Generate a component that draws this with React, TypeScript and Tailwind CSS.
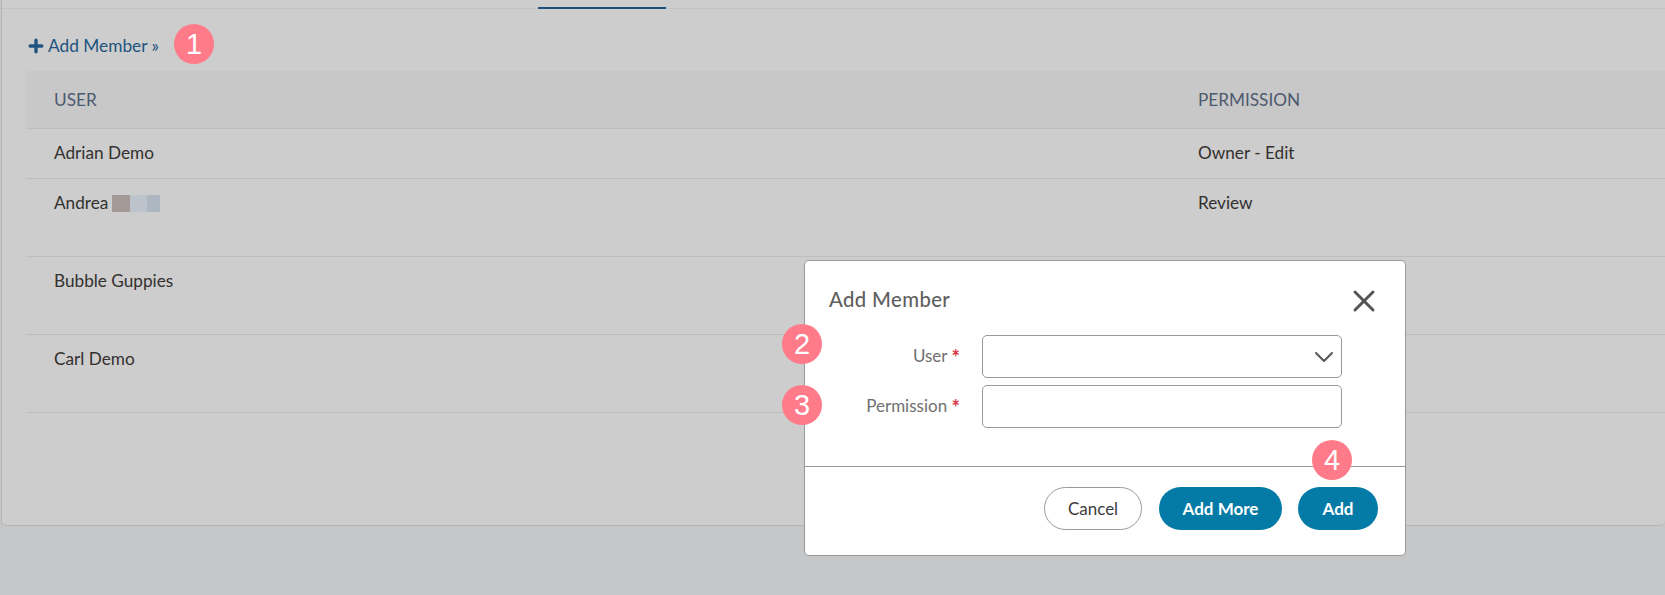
import { ChevronDown, Plus, X } from "lucide-react";

const rows = [
  { name: "Adrian Demo", permission: "Owner - Edit", height: "h-[50px]" },
  { name: "Andrea", permission: "Review", height: "h-[78px]", blurred: true },
  { name: "Bubble Guppies", permission: "", height: "h-[78px]" },
  { name: "Carl Demo", permission: "", height: "h-[78px]" },
];

function Badge({ n, className }: { n: number; className: string }) {
  return (
    <div className={`absolute flex h-10 w-10 items-center justify-center rounded-full bg-[#ff7b89] text-[29px] leading-none text-white font-['Liberation_Sans',sans-serif] ${className}`}>
      {n}
    </div>
  );
}

function Field({ label, select }: { label: string; select?: boolean }) {
  return (
    <div className="flex items-center">
      <div className="w-[155px] pb-[2px] pr-[22px] text-right text-[17px] text-[#707070]">
        {label} <span className="align-[-3px] text-[20px] font-bold leading-none text-[#d9333f]">*</span>
      </div>
      <div className="flex h-[43px] w-[360px] items-center justify-end rounded-[5px] border border-[#999999] bg-white pr-px">
        {select && <ChevronDown size={32} strokeWidth={1.5} className="text-[#555555]" />}
      </div>
    </div>
  );
}

export default function App() {
  return (
    <div className="relative h-[595px] w-full overflow-hidden bg-[#c6c7c9] font-['Lato','Noto_Sans',sans-serif]">
      <div className="ml-px h-[526px] rounded-b-[5px] border-b border-l border-[#b3b5b8] bg-[#cdcdcd] pl-[24px]">
        <div className="relative -ml-6 h-[9px] border-b border-[#c3c3c3]">
          <div className="absolute bottom-[-1px] left-[536px] h-[2px] w-[128px] bg-[#1d4f7c]" />
        </div>
        <div className="flex h-[62px] items-center pt-[11px] text-[17.3px] text-[#21537f]">
          <Plus size={20} strokeWidth={4} className="mr-[2px]" />
          <span>Add Member »</span>
        </div>
        <div>
          <div className="flex h-[58px] items-center border-b border-[#bdbdbd] bg-[#c8c8c8] pl-[28px] text-[17.2px] text-[#4d5a6f]">
            <div className="w-[1144px]">USER</div>
            <div>PERMISSION</div>
          </div>
          {rows.map((row) => (
            <div key={row.name} className={`flex border-b border-[#bdbdbd] pl-[28px] pt-[14px] text-[17.2px] text-[#33302f] ${row.height}`}>
              <div className="flex h-[20px] w-[1144px] items-center">
                {row.name}
                {row.blurred && (
                  <div className="ml-1 flex h-[17px]">
                    <div className="w-[18px] bg-[#a39a98]" />
                    <div className="w-[17px] bg-[#bcc3cb]" />
                    <div className="w-[13px] bg-[#adb7c2]" />
                  </div>
                )}
              </div>
              <div className="h-[20px] leading-5">{row.permission}</div>
            </div>
          ))}
        </div>
      </div>

      <Badge n={1} className="left-[174px] top-[24px]" />

      <div className="absolute left-[804px] top-[260px] flex h-[296px] w-[602px] flex-col rounded-[5px] border border-[#999999] bg-white">
        <div className="flex h-[74px] shrink-0 items-start justify-between pl-[24px] pr-[23px] pt-[24px]">
          <div className="pt-[2px] text-[20.3px] font-medium leading-[25px] tracking-[0.4px] text-[#5f5f5f]">Add Member</div>
          <X size={36} strokeWidth={2} className="-mt-[2px] text-[#555555]" />
        </div>
        <div className="flex h-[132px] shrink-0 flex-col gap-[7px] border-b border-[#999999] pl-[22px]">
          <Field label="User" select />
          <Field label="Permission" />
        </div>
        <div className="flex flex-1 items-start justify-end gap-[16px] pr-[27px] pt-5 text-[17px]">
          <button className="mr-px h-[43px] w-[98px] rounded-full border border-[#999999] bg-white text-[#3c3c3c]">Cancel</button>
          <button className="h-[43px] w-[123px] rounded-full bg-[#047aa6] font-bold text-white">Add More</button>
          <button className="h-[43px] w-[80px] rounded-full bg-[#047aa6] font-bold text-white">Add</button>
        </div>
      </div>

      <Badge n={2} className="left-[782px] top-[324px]" />
      <Badge n={3} className="left-[782px] top-[385px]" />
      <Badge n={4} className="left-[1312px] top-[440px]" />
    </div>
  );
}
